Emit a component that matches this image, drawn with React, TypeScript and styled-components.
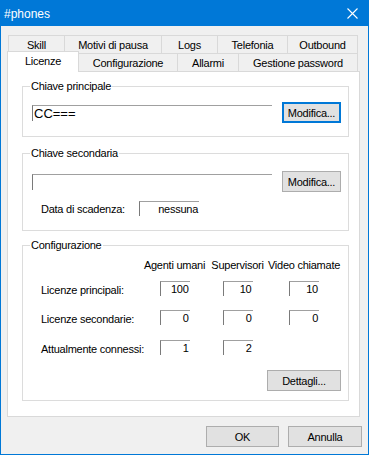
import React from "react";
import styled, { createGlobalStyle } from "styled-components";

const Global = createGlobalStyle`
  html, body { margin: 0; padding: 0; background: #f0f0f0; }
  body { font-family: "Liberation Sans", Arial, sans-serif; font-size: 11px; color: #000; letter-spacing: -0.25px; }
  * { box-sizing: border-box; }
`;

const Window = styled.div`
  width: 369px;
  height: 455px;
  border: 1px solid #0078d7;
  background: #f0f0f0;
  display: flex;
  flex-direction: column;
`;

const TitleBar = styled.div`
  height: 25px;
  background: #0078d7;
  color: #fff;
  display: flex;
  align-items: center;
  justify-content: space-between;
  padding: 0 10px 0 3px;
  font-size: 12px;
  letter-spacing: 0;
`;

const TitleText = styled.span`
  line-height: 14px;
  padding-top: 1px;
`;

const CloseIcon = () => (
  <svg width="11" height="11" viewBox="0 0 11 11">
    <path d="M0.5 0.5 L10.5 10.5 M10.5 0.5 L0.5 10.5" stroke="#fff" strokeWidth="1.1" fill="none" />
  </svg>
);

const Tabs = styled.div`
  margin-top: 9px;
  padding-left: 7px;
  display: flex;
  flex-direction: column;
`;

const TabRow = styled.div`
  display: flex;
  height: 18px;
`;

const Tab = styled.div<{ $w: number; $active?: boolean }>`
  width: ${(p) => p.$w}px;
  height: ${(p) => (p.$active ? 21 : 18)}px;
  margin-top: ${(p) => (p.$active ? -2 : 0)}px;
  margin-left: ${(p) => (p.$active ? -1 : 0)}px;
  margin-right: -1px;
  border: 1px solid #d9d9d9;
  border-bottom: none;
  background: ${(p) => (p.$active ? "#fff" : "#f0f0f0")};
  position: relative;
  z-index: ${(p) => (p.$active ? 2 : 0)};
  display: flex;
  justify-content: center;
  align-items: ${(p) => (p.$active ? "flex-start" : "center")};
  padding-top: ${(p) => (p.$active ? 2 : 0)}px;
  font-size: 11px;
  line-height: 14px;
  white-space: nowrap;
`;

const Panel = styled.div`
  margin: 0 8px 0 6px;
  border: 1px solid #d9d9d9;
  background: #fff;
  padding: 7px 10px 15px 14px;
  display: flex;
  flex-direction: column;
`;

const Group = styled.fieldset<{ $mt?: number; $pt: number; $pb: number }>`
  margin: ${(p) => p.$mt ?? 0}px 0 0 0;
  padding: ${(p) => p.$pt}px 0 ${(p) => p.$pb}px 0;
  border: 1px solid #dcdcdc;
  min-width: 0;
  display: flex;
  flex-direction: column;
`;

const Legend = styled.legend`
  margin-left: 7px;
  padding: 0 1px;
  font-size: 11px;
  line-height: 14px;
`;

const KeyRow = styled.div`
  display: flex;
  align-items: center;
  justify-content: space-between;
  padding: 0 7px 0 9px;
`;

const KeyField = styled.div`
  width: 240px;
  height: 16px;
  border-top: 1px solid #a0a0a0;
  border-left: 1px solid #7a7a7a;
  padding-left: 1px;
  font-size: 13px;
  line-height: 15px;
  letter-spacing: 0;
  white-space: nowrap;
`;

const Button = styled.div<{ $w: number; $focus?: boolean }>`
  width: ${(p) => p.$w}px;
  height: 21px;
  background: #e1e1e1;
  border: ${(p) => (p.$focus ? "2px solid #0078d7" : "1px solid #adadad")};
  display: flex;
  align-items: center;
  justify-content: center;
  font-size: 11px;
  white-space: nowrap;
`;

const DateRow = styled.div`
  display: flex;
  align-items: center;
  margin-top: 9px;
  padding-left: 18px;
  height: 15px;
`;

const DateLabel = styled.span`
  width: 98px;
  padding-top: 1px;
  white-space: nowrap;
`;

const ValueBox = styled.div<{ $w: number }>`
  width: ${(p) => p.$w}px;
  height: 15px;
  border-top: 1px solid #a0a0a0;
  border-left: 1px solid #7a7a7a;
  text-align: right;
  padding-right: 1px;
  font-size: 11px;
  line-height: 14px;
  white-space: nowrap;
`;

const Grid = styled.div`
  display: grid;
  margin-left: 18px;
  grid-template-columns: 99px 69px 57px 76px;
  grid-template-rows: 23px 29px 30px 15px;
`;

const Header = styled.span`
  justify-self: center;
  align-self: start;
  line-height: 14px;
  white-space: nowrap;
`;

const RowLabel = styled.span`
  align-self: start;
  line-height: 15px;
  padding-top: 2px;
  white-space: nowrap;
`;

const Cell = styled.div`
  justify-self: center;
  align-self: start;
`;

const ButtonRow = styled.div<{ $pr: number; $mt: number; $gap?: number }>`
  display: flex;
  justify-content: flex-end;
  gap: ${(p) => p.$gap ?? 0}px;
  padding-right: ${(p) => p.$pr}px;
  margin-top: ${(p) => p.$mt}px;
`;

const row1 = [
  { t: "Skill", w: 57 },
  { t: "Motivi di pausa", w: 98 },
  { t: "Logs", w: 57 },
  { t: "Telefonia", w: 71 },
  { t: "Outbound", w: 71 },
];
const row2 = [
  { t: "Licenze", w: 72, active: true },
  { t: "Configurazione", w: 100 },
  { t: "Allarmi", w: 62 },
  { t: "Gestione password", w: 120 },
];

const rows = [
  { label: "Licenze principali:", v: ["100", "10", "10"] },
  { label: "Licenze secondarie:", v: ["0", "0", "0"] },
  { label: "Attualmente connessi:", v: ["1", "2"] },
];

export default function App() {
  return (
    <>
      <Global />
      <Window>
        <TitleBar>
          <TitleText>#phones</TitleText>
          <CloseIcon />
        </TitleBar>
        <Tabs>
          <TabRow>
            {row1.map((t) => (
              <Tab key={t.t} $w={t.w}>{t.t}</Tab>
            ))}
          </TabRow>
          <TabRow>
            {row2.map((t) => (
              <Tab key={t.t} $w={t.w} $active={t.active}>{t.t}</Tab>
            ))}
          </TabRow>
        </Tabs>
        <Panel>
          <Group $pt={9} $pb={13}>
            <Legend>Chiave principale</Legend>
            <KeyRow>
              <KeyField>CC===</KeyField>
              <Button $w={59} $focus>Modifica...</Button>
            </KeyRow>
          </Group>
          <Group $mt={9} $pt={11} $pb={14}>
            <Legend>Chiave secondaria</Legend>
            <KeyRow>
              <KeyField />
              <Button $w={59}>Modifica...</Button>
            </KeyRow>
            <DateRow>
              <DateLabel>Data di scadenza:</DateLabel>
              <ValueBox $w={60}>nessuna</ValueBox>
            </DateRow>
          </Group>
          <Group $mt={7} $pt={6} $pb={9}>
            <Legend>Configurazione</Legend>
            <Grid>
              <span />
              <Header>Agenti umani</Header>
              <Header>Supervisori</Header>
              <Header>Video chiamate</Header>
              {rows.map((r) => (
                <React.Fragment key={r.label}>
                  <RowLabel>{r.label}</RowLabel>
                  {[0, 1, 2].map((i) => (
                    <Cell key={i}>
                      {r.v[i] !== undefined ? <ValueBox $w={30}>{r.v[i]}</ValueBox> : null}
                    </Cell>
                  ))}
                </React.Fragment>
              ))}
            </Grid>
            <ButtonRow $pr={7} $mt={15}>
              <Button $w={74}>Dettagli...</Button>
            </ButtonRow>
          </Group>
        </Panel>
        <ButtonRow $pr={6} $mt={9} $gap={9}>
          <Button $w={73}>OK</Button>
          <Button $w={74}>Annulla</Button>
        </ButtonRow>
      </Window>
    </>
  );
}
